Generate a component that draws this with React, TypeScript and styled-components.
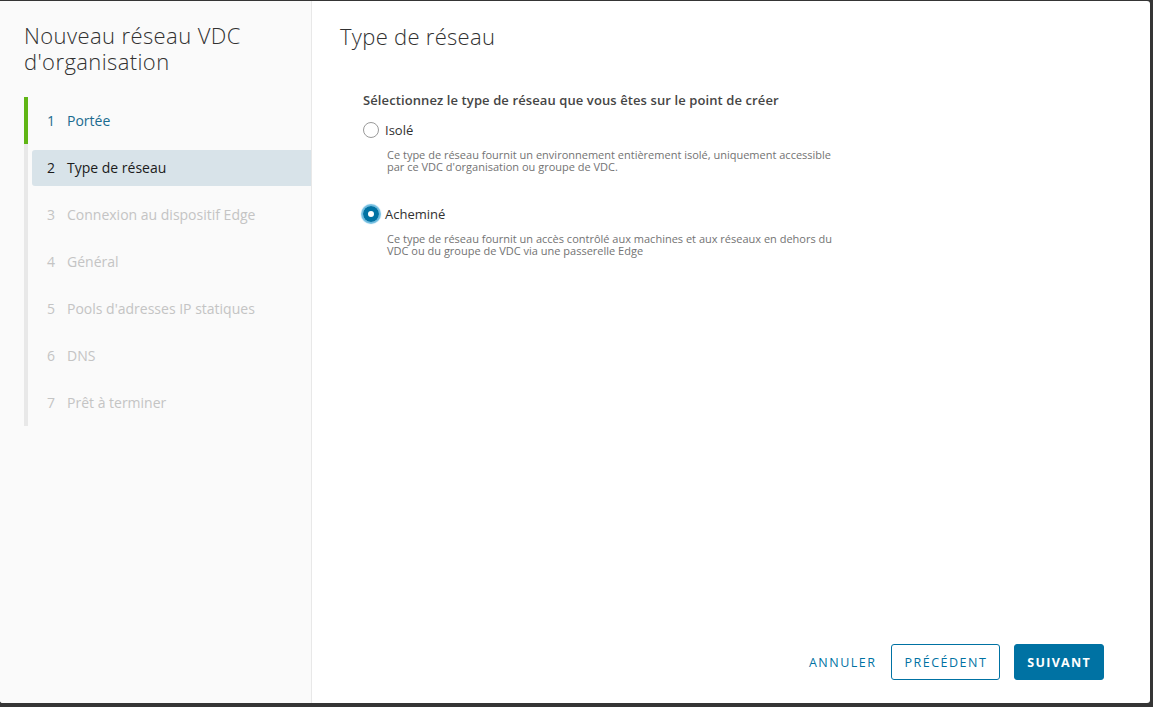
import React, { useState } from "react";
import styled, { createGlobalStyle } from "styled-components";

const GlobalStyle = createGlobalStyle`
  html, body {
    margin: 0;
    padding: 0;
    background: #353535;
    font-family: "Open Sans", "Lato", sans-serif;
    -webkit-font-smoothing: antialiased;
  }
  * { box-sizing: border-box; }
`;

const Backdrop = styled.div`
  width: 1153px;
  height: 707px;
  padding: 1px 3px 4px 0;
  overflow: hidden;
`;

const Modal = styled.div`
  display: flex;
  height: 100%;
  background: #fff;
  border-radius: 0 3px 3px 3px;
  overflow: hidden;
`;

const Sidebar = styled.aside`
  width: 312px;
  flex-shrink: 0;
  background: #fafafa;
  border-right: 1px solid #e8e8e8;
  padding: 21px 0 0 24px;
`;

const WizardTitle = styled.h1`
  margin: 0 0 23px;
  font-size: 22px;
  line-height: 26px;
  font-weight: 300;
  letter-spacing: 0.4px;
  color: #313131;
`;

const StepList = styled.ol`
  list-style: none;
  margin: 0;
  padding: 0;
`;

type StepState = "done" | "current" | "disabled";

const stepColors: Record<StepState, string> = {
  done: "#1a6b8f",
  current: "#1b1b1b",
  disabled: "#c4c4c4",
};

const StepItem = styled.li<{ $complete: boolean }>`
  height: 47px;
  display: flex;
  align-items: center;
  border-left: 4px solid ${({ $complete }) => ($complete ? "#60b515" : "#e8e8e8")};
`;

const StepButton = styled.button<{ $state: StepState }>`
  flex: 1;
  height: 36px;
  margin-left: 4px;
  display: flex;
  align-items: center;
  gap: 11px;
  padding: 0 0 0 15px;
  border: none;
  border-radius: 3px 0 0 3px;
  background: ${({ $state }) => ($state === "current" ? "#d8e3e9" : "transparent")};
  color: ${({ $state }) => stepColors[$state]};
  font-family: inherit;
  font-size: 14px;
  font-weight: 400;
  text-align: left;
  cursor: ${({ $state }) => ($state === "disabled" ? "default" : "pointer")};
`;

const StepNumber = styled.span`
  width: 9px;
`;

const Main = styled.section`
  flex: 1;
  display: flex;
  flex-direction: column;
  padding: 21px 46px 23px 28px;
`;

const PageTitle = styled.h2`
  margin: 0;
  font-size: 22px;
  line-height: 28px;
  font-weight: 300;
  letter-spacing: 0.3px;
  color: #313131;
`;

const Content = styled.div`
  flex: 1;
  padding: 41px 0 0 23px;
`;

const Question = styled.div`
  font-size: 13px;
  font-weight: 600;
  letter-spacing: 0.1px;
  color: #454545;
  margin-bottom: 12px;
`;

const Option = styled.div`
  margin-bottom: 32px;
`;

const RadioRow = styled.label`
  display: flex;
  align-items: center;
  gap: 6px;
  font-size: 13px;
  color: #313131;
  cursor: pointer;
`;

const RadioCircle = styled.span<{ $checked: boolean }>`
  width: 16px;
  height: 16px;
  border-radius: 50%;
  flex-shrink: 0;
  background: #fff;
  border: ${({ $checked }) => ($checked ? "none" : "1px solid #9a9a9a")};
  box-shadow: ${({ $checked }) =>
    $checked ? "inset 0 0 0 5px #0072a3, 0 0 1px 2px #6bbbe0" : "none"};
`;

const Description = styled.p`
  margin: 10px 0 0 24px;
  max-width: 462px;
  font-size: 11px;
  line-height: 12px;
  color: #737373;
`;

const Footer = styled.div`
  display: flex;
  justify-content: flex-end;
  align-items: center;
  gap: 14px;
`;

const Button = styled.button<{ $variant: "flat" | "outline" | "solid" }>`
  height: 36px;
  padding: 0 ${({ $variant }) => ($variant === "flat" ? "0" : "12px")};
  border-radius: 3px;
  font-family: inherit;
  font-size: 12.5px;
  font-weight: ${({ $variant }) => ($variant === "solid" ? 700 : 500)};
  letter-spacing: ${({ $variant }) => ($variant === "solid" ? "1.3px" : "1.5px")};
  text-transform: uppercase;
  cursor: pointer;
  border: 1px solid
    ${({ $variant }) => ($variant === "flat" ? "transparent" : "#0072a3")};
  background: ${({ $variant }) => ($variant === "solid" ? "#0072a3" : "#fff")};
  color: ${({ $variant }) => ($variant === "solid" ? "#fff" : "#0072a3")};
`;

const steps = [
  "Portée",
  "Type de réseau",
  "Connexion au dispositif Edge",
  "Général",
  "Pools d'adresses IP statiques",
  "DNS",
  "Prêt à terminer",
];

const options = [
  {
    id: "isolated",
    label: "Isolé",
    description:
      "Ce type de réseau fournit un environnement entièrement isolé, uniquement accessible par ce VDC d'organisation ou groupe de VDC.",
  },
  {
    id: "routed",
    label: "Acheminé",
    description:
      "Ce type de réseau fournit un accès contrôlé aux machines et aux réseaux en dehors du VDC ou du groupe de VDC via une passerelle Edge",
  },
];

export default function App() {
  const [selected, setSelected] = useState("routed");
  const current = 1;

  return (
    <>
      <GlobalStyle />
      <Backdrop>
        <Modal>
          <Sidebar>
            <WizardTitle>
              Nouveau réseau VDC
              <br />
              d'organisation
            </WizardTitle>
            <StepList>
              {steps.map((label, i) => {
                const state: StepState =
                  i < current ? "done" : i === current ? "current" : "disabled";
                return (
                  <StepItem key={label} $complete={i < current}>
                    <StepButton $state={state}>
                      <StepNumber>{i + 1}</StepNumber>
                      {label}
                    </StepButton>
                  </StepItem>
                );
              })}
            </StepList>
          </Sidebar>
          <Main>
            <PageTitle>Type de réseau</PageTitle>
            <Content>
              <Question>
                Sélectionnez le type de réseau que vous êtes sur le point de créer
              </Question>
              {options.map((opt) => (
                <Option key={opt.id}>
                  <RadioRow onClick={() => setSelected(opt.id)}>
                    <RadioCircle $checked={selected === opt.id} />
                    {opt.label}
                  </RadioRow>
                  <Description>{opt.description}</Description>
                </Option>
              ))}
            </Content>
            <Footer>
              <Button $variant="flat">Annuler</Button>
              <Button $variant="outline">Précédent</Button>
              <Button $variant="solid">Suivant</Button>
            </Footer>
          </Main>
        </Modal>
      </Backdrop>
    </>
  );
}
